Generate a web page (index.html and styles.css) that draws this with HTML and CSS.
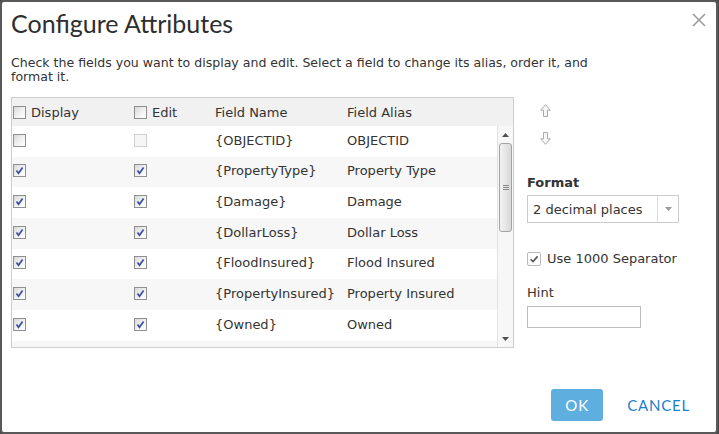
FILE: index.html
```html
<!DOCTYPE html>
<html>
<head>
<meta charset="utf-8">
<title>Configure Attributes</title>
<link rel="stylesheet" href="styles.css">
</head>
<body>
<div class="dialog">
  <div class="header">
    <h1 class="title">Configure Attributes</h1>
    <button class="close" aria-label="Close"><svg viewBox="0 0 14 14" width="14" height="14"><path d="M1 1L13 13M13 1L1 13" stroke="#9c9c9c" stroke-width="1.6" fill="none"/></svg></button>
  </div>
  <p class="desc">Check the fields you want to display and edit. Select a field to change its alias, order it, and format it.</p>
  <div class="main">
    <div class="grid">
      <div class="grid-head cols">
        <div class="c"><span class="cb"></span>Display</div>
        <div class="c"><span class="cb"></span>Edit</div>
        <div class="c">Field Name</div>
        <div class="c">Field Alias</div>
      </div>
      <div class="grid-body">
        <div class="rows">
          <div class="row cols">
            <div class="c"><span class="cb"></span></div>
            <div class="c"><span class="cb off"></span></div>
            <div class="c">{OBJECTID}</div>
            <div class="c">OBJECTID</div>
          </div>
          <div class="row cols">
            <div class="c"><span class="cb"><svg viewBox="0 0 11 11"><path d="M2.5 5.5L4.5 8.2L8.6 2.4"/></svg></span></div>
            <div class="c"><span class="cb"><svg viewBox="0 0 11 11"><path d="M2.5 5.5L4.5 8.2L8.6 2.4"/></svg></span></div>
            <div class="c">{PropertyType}</div>
            <div class="c">Property Type</div>
          </div>
          <div class="row cols">
            <div class="c"><span class="cb"><svg viewBox="0 0 11 11"><path d="M2.5 5.5L4.5 8.2L8.6 2.4"/></svg></span></div>
            <div class="c"><span class="cb"><svg viewBox="0 0 11 11"><path d="M2.5 5.5L4.5 8.2L8.6 2.4"/></svg></span></div>
            <div class="c">{Damage}</div>
            <div class="c">Damage</div>
          </div>
          <div class="row cols">
            <div class="c"><span class="cb"><svg viewBox="0 0 11 11"><path d="M2.5 5.5L4.5 8.2L8.6 2.4"/></svg></span></div>
            <div class="c"><span class="cb"><svg viewBox="0 0 11 11"><path d="M2.5 5.5L4.5 8.2L8.6 2.4"/></svg></span></div>
            <div class="c">{DollarLoss}</div>
            <div class="c">Dollar Loss</div>
          </div>
          <div class="row cols">
            <div class="c"><span class="cb"><svg viewBox="0 0 11 11"><path d="M2.5 5.5L4.5 8.2L8.6 2.4"/></svg></span></div>
            <div class="c"><span class="cb"><svg viewBox="0 0 11 11"><path d="M2.5 5.5L4.5 8.2L8.6 2.4"/></svg></span></div>
            <div class="c">{FloodInsured}</div>
            <div class="c">Flood Insured</div>
          </div>
          <div class="row cols">
            <div class="c"><span class="cb"><svg viewBox="0 0 11 11"><path d="M2.5 5.5L4.5 8.2L8.6 2.4"/></svg></span></div>
            <div class="c"><span class="cb"><svg viewBox="0 0 11 11"><path d="M2.5 5.5L4.5 8.2L8.6 2.4"/></svg></span></div>
            <div class="c">{PropertyInsured}</div>
            <div class="c">Property Insured</div>
          </div>
          <div class="row cols">
            <div class="c"><span class="cb"><svg viewBox="0 0 11 11"><path d="M2.5 5.5L4.5 8.2L8.6 2.4"/></svg></span></div>
            <div class="c"><span class="cb"><svg viewBox="0 0 11 11"><path d="M2.5 5.5L4.5 8.2L8.6 2.4"/></svg></span></div>
            <div class="c">{Owned}</div>
            <div class="c">Owned</div>
          </div>
          <div class="row cols"></div>
        </div>
        <div class="scrollbar">
          <div class="sb-btn"><svg viewBox="0 0 7 4" width="7" height="4"><path d="M0 4L3.5 0L7 4Z" fill="#505050"/></svg></div>
          <div class="thumb"><svg viewBox="0 0 6 7" width="6" height="7"><path d="M0 1.5H6M0 3.5H6M0 5.5H6" stroke="#8a8a8a" stroke-width="1"/></svg></div>
          <div class="track"></div>
          <div class="sb-btn"><svg viewBox="0 0 7 4" width="7" height="4"><path d="M0 0L3.5 4L7 0Z" fill="#505050"/></svg></div>
        </div>
      </div>
    </div>
    <div class="side">
      <div class="move up"><svg viewBox="0 0 11 13" width="11" height="13"><path d="M5.5 0.7L10.3 6.2H7.5V12.5H3.5V6.2H0.7Z" fill="#f7f7f7" stroke="#a9a9a9" stroke-width="1"/></svg></div>
      <div class="move down"><svg viewBox="0 0 11 13" width="11" height="13"><path d="M5.5 12.3L10.3 6.8H7.5V0.5H3.5V6.8H0.7Z" fill="#f7f7f7" stroke="#a9a9a9" stroke-width="1"/></svg></div>
      <div class="label bold">Format</div>
      <div class="select">
        <span class="select-text">2 decimal places</span>
        <span class="select-arrow"><svg viewBox="0 0 7 4" width="7" height="4"><path d="M0 0L3.5 4L7 0Z" fill="#9a9a9a"/></svg></span>
      </div>
      <label class="check">
        <span class="cb2"><svg viewBox="0 0 12 12" width="12" height="12"><path d="M2.6 6.2L5 8.6L9.6 3.4" stroke="#555" stroke-width="1.6" fill="none"/></svg></span>
        Use 1000 Separator
      </label>
      <div class="label hint">Hint</div>
      <div class="input"></div>
    </div>
  </div>
  <div class="footer">
    <button class="btn-ok">OK</button>
    <button class="btn-cancel">CANCEL</button>
  </div>
</div>
</body>
</html>
```

FILE: styles.css
```css
* { box-sizing: border-box; }
html, body { margin: 0; padding: 0; }
body {
  width: 719px;
  height: 434px;
  overflow: hidden;
  background: #4a4a4a;
  font-family: "DejaVu Sans", Verdana, sans-serif;
  font-size: 13px;
  color: #333;
}
.dialog {
  width: 718px;
  height: 434px;
  background: #fff;
  border: 2px solid #595959;
  border-radius: 4px;
  display: flex;
  flex-direction: column;
}
.header {
  display: flex;
  justify-content: space-between;
  align-items: flex-start;
  padding: 7px 10px 0 9px;
}
.title {
  margin: 0;
  font-family: Lato, "Open Sans", sans-serif;
  font-weight: 400;
  font-size: 25px;
  line-height: 28px;
  color: #2e2e2e;
}
.close {
  margin-top: 4px;
  width: 14px;
  height: 14px;
  padding: 0;
  border: 0;
  background: none;
  display: block;
}
.close svg { display: block; }
.desc {
  margin: 19px 0 0 9px;
  width: 610px;
  font-size: 12.55px;
  line-height: 14px;
}
.main {
  display: flex;
  margin: 13px 0 0 9px;
}
.grid {
  width: 503px;
  height: 251px;
  border: 1px solid #cdcdcd;
  display: flex;
  flex-direction: column;
}
.cols {
  display: grid;
  grid-template-columns: 121px 81px 132px 1fr;
}
.grid-head {
  height: 28px;
  background: #f1f1f1;
  align-items: center;
}
.c {
  display: flex;
  align-items: center;
  gap: 5px;
  padding-left: 1px;
  line-height: 15px;
  white-space: nowrap;
}
.grid-body {
  flex: 1;
  display: flex;
  min-height: 0;
}
.rows {
  flex: 1;
  overflow: hidden;
}
.row {
  height: 30.67px;
  padding-bottom: 2px;
  align-items: center;
  background: #fff;
}
.row:nth-child(even) { background: #f6f7f6; }
.cb {
  flex: none;
  width: 13px;
  height: 13px;
  border: 1px solid #8e8f8f;
  background: linear-gradient(135deg, #d9d9d9 0%, #f4f4f4 60%, #fff 100%);
  display: flex;
  align-items: center;
  justify-content: center;
}
.cb svg {
  width: 11px;
  height: 11px;
  fill: none;
  stroke: #3b4f9e;
  stroke-width: 1.7;
}
.cb.off {
  border-color: #cfcfcf;
  background: #f6f6f6;
}
.scrollbar {
  width: 16px;
  display: flex;
  flex-direction: column;
  background: #f7f7f7;
  border-left: 1px solid #e2e2e2;
}
.sb-btn {
  height: 17px;
  display: flex;
  align-items: center;
  justify-content: center;
}
.sb-btn:last-child { height: 16px; }
.thumb {
  height: 89px;
  margin: 0 1px 0 1px;
  border: 1px solid #a3a3a3;
  border-radius: 3px;
  background: linear-gradient(to right, #f3f3f3, #d9d9d9);
  display: flex;
  align-items: center;
  justify-content: center;
}
.thumb svg { display: block; }
.track { flex: 1; }
.side {
  margin-left: 13px;
  display: flex;
  flex-direction: column;
  align-items: flex-start;
}
.move {
  margin-left: 13px;
  height: 13px;
}
.move svg { display: block; }
.move.up { margin-top: 7px; }
.move.down { margin-top: 15px; }
.label { line-height: 15px; }
.bold {
  font-weight: bold;
  margin-top: 30px;
}
.select {
  margin-top: 5px;
  width: 152px;
  height: 28px;
  border: 1px solid #cccccc;
  display: flex;
  align-items: center;
}
.select-text {
  flex: 1;
  padding-left: 5px;
  line-height: 15px;
}
.select-arrow {
  width: 21px;
  height: 100%;
  border-left: 1px solid #dcdcdc;
  display: flex;
  align-items: center;
  justify-content: center;
}
.select-arrow svg { display: block; }
.check {
  margin-top: 28px;
  display: flex;
  align-items: center;
  gap: 6px;
  line-height: 15px;
}
.cb2 {
  width: 14px;
  height: 14px;
  border: 1px solid #b9b9b9;
  border-radius: 2px;
  display: flex;
  align-items: center;
  justify-content: center;
  background: #fff;
}
.cb2 svg { display: block; }
.hint { margin-top: 19px; }
.input {
  margin-top: 6px;
  width: 114px;
  height: 22px;
  border: 1px solid #bdbdbd;
}
.footer {
  margin-top: auto;
  display: flex;
  justify-content: flex-end;
  align-items: center;
  padding: 0 26px 11px 0;
}
.btn-ok {
  width: 52px;
  height: 32px;
  border: 0;
  border-radius: 3px;
  background: #5eaee0;
  color: #fff;
  font-family: Lato, sans-serif;
  font-size: 15px;
  letter-spacing: 1px;
  padding: 0;
}
.btn-cancel {
  margin-left: 24px;
  border: 0;
  background: none;
  padding: 0;
  color: #1c7fcc;
  font-family: Lato, sans-serif;
  font-size: 15px;
  letter-spacing: 0.8px;
}
```
